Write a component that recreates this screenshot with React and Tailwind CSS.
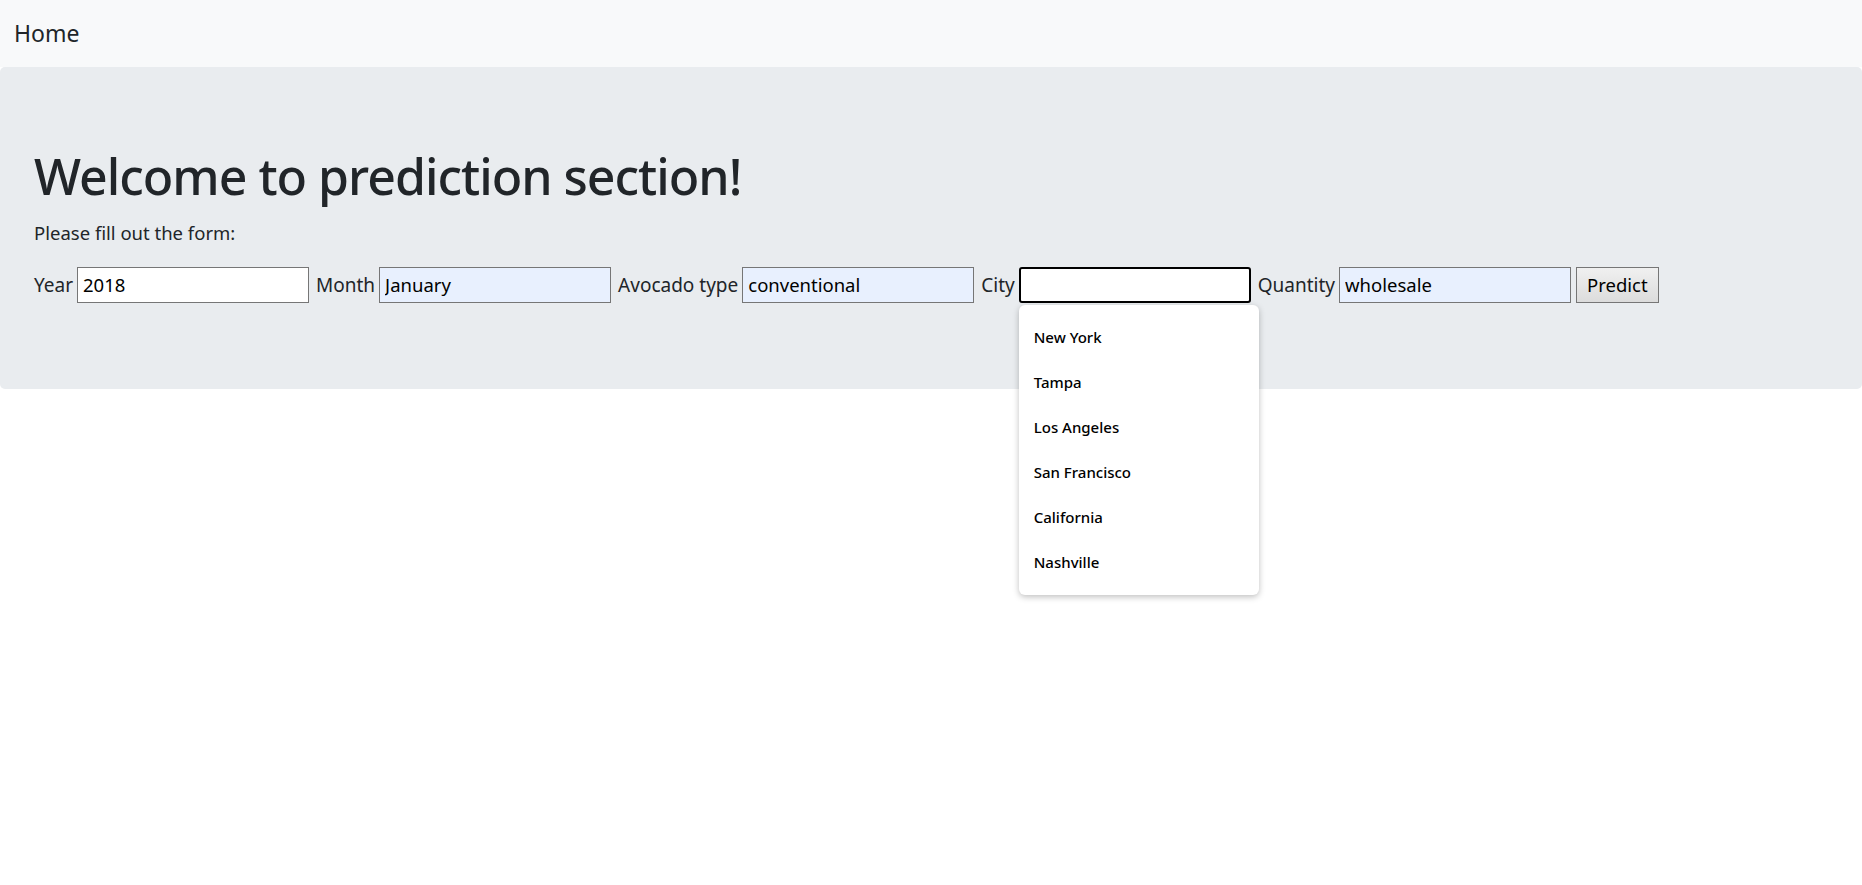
import React from "react";

const cities = ["New York", "Tampa", "Los Angeles", "San Francisco", "California", "Nashville"];

function Field({ label, value, filled, focused, children }) {
  return (
    <div className="flex items-center gap-[4px]">
      <label className="text-[19px] text-[#212529]">{label}</label>
      <div className="relative">
        <input
          readOnly
          value={value}
          className={
            "w-[232px] h-[36px] px-[5px] text-[18.5px] text-black outline-none " +
            (focused
              ? "bg-white border-2 border-black rounded-[3px]"
              : filled
              ? "bg-[#e8f0fe] border border-[#767676]"
              : "bg-white border border-[#767676]")
          }
        />
        {children}
      </div>
    </div>
  );
}

export default function App() {
  return (
    <div className="min-h-screen bg-white font-['Noto_Sans',sans-serif] text-[#212529]">
      <nav className="h-[67px] bg-[#f8f9fa] flex items-center px-[14px]">
        <span className="text-[23px] text-[#212529]">Home</span>
      </nav>

      <div className="h-[322px] bg-[#e9ecef] rounded-[5px] pl-[34px] pt-[77px]">
        <h1 className="text-[50px] leading-[64px] font-medium tracking-[-1px]">
          Welcome to prediction section!
        </h1>
        <p className="text-[18.5px] mt-[11px]">Please fill out the form:</p>

        <div className="flex items-center gap-[7px] mt-[20px]">
          <Field label="Year" value="2018" />
          <Field label="Month" value="January" filled />
          <Field label="Avocado type" value="conventional" filled />
          <Field label="City" value="" focused>
            <div className="absolute left-0 top-[38px] w-[240px] bg-white rounded-[6px] shadow-[0_2px_6px_rgba(0,0,0,0.25)] py-[10px] z-10">
              {cities.map((c) => (
                <div key={c} className="h-[45px] flex items-center px-[15px] text-[15px] font-medium text-black">
                  {c}
                </div>
              ))}
            </div>
          </Field>
          <Field label="Quantity" value="wholesale" filled />
          <button className="h-[36px] px-[10px] -ml-[2px] text-[18.5px] text-black border border-[#767676] bg-gradient-to-b from-[#f0f0f0] to-[#dcdcdc]">
            Predict
          </button>
        </div>
      </div>
    </div>
  );
}
